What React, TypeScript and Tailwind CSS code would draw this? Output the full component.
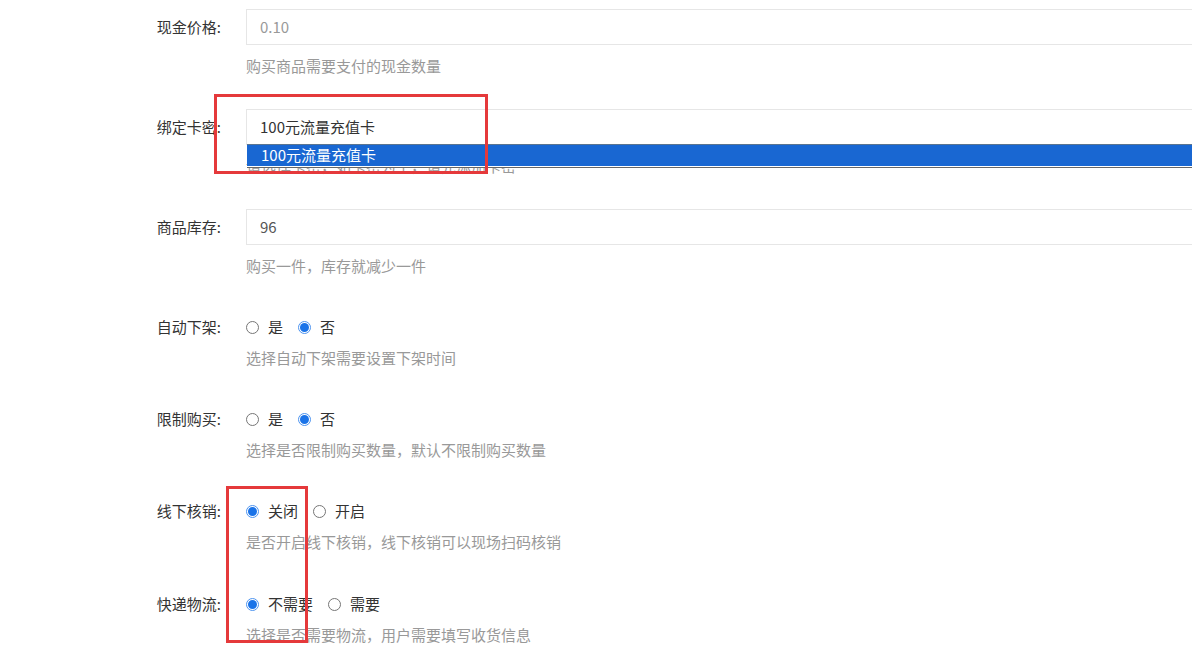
import React from "react";

const FONT = { fontFamily: '"Noto Sans CJK SC", "Noto Sans", sans-serif' };

function Label({ text }: { text: string }) {
  return (
    <div className="w-[246px] shrink-0 pr-[25px] text-right text-[15px] text-[#333]">{text}</div>
  );
}

function Help({ text }: { text: string }) {
  return <div className="mt-[11px] pl-[246px] text-[15px] leading-[20px] text-[#999]">{text}</div>;
}

function InputRow({
  label,
  value,
  help,
  valueClass,
}: {
  label: string;
  value: string;
  help: string;
  valueClass: string;
}) {
  return (
    <div className="relative mb-[33px]">
      <div className="flex items-center">
        <Label text={label} />
        <div className="flex h-[36px] flex-1 items-center border border-r-0 border-[#e6e6e6] bg-white pl-[13px]">
          <span className={`text-[15px] ${valueClass}`}>{value}</span>
        </div>
      </div>
      <Help text={help} />
    </div>
  );
}

function Radio({ checked, text }: { checked: boolean; text: string }) {
  return (
    <div className="mr-[15px] flex items-center">
      {checked ? (
        <span className="flex h-[13px] w-[13px] items-center justify-center rounded-full border border-[#4d94f0] bg-white">
          <span className="h-[9px] w-[9px] rounded-full bg-[#1a73e8]" />
        </span>
      ) : (
        <span className="h-[13px] w-[13px] rounded-full border border-[#767676] bg-white" />
      )}
      <span className="ml-[9px] text-[15px] text-[#333]">{text}</span>
    </div>
  );
}

function RadioRow({
  label,
  options,
  help,
  last,
}: {
  label: string;
  options: { text: string; checked: boolean }[];
  help: string;
  last?: boolean;
}) {
  return (
    <div className={last ? "mt-[42px]" : "mt-[41px]"}>
      <div className="flex h-[20px] items-center">
        <Label text={label} />
        {options.map((o) => (
          <Radio key={o.text} checked={o.checked} text={o.text} />
        ))}
      </div>
      <Help text={help} />
    </div>
  );
}

export default function App() {
  return (
    <div className="relative h-[667px] w-[1192px] overflow-hidden bg-white pt-[9px]" style={FONT}>
      <InputRow label="现金价格:" value="0.10" valueClass="text-[#999]" help="购买商品需要支付的现金数量" />

      <div className="relative mb-[33px]">
        <div className="flex items-center">
          <Label text="绑定卡密:" />
          <div className="flex h-[36px] flex-1 items-center border border-r-0 border-[#e6e6e6] bg-white pl-[13px]">
            <span className="text-[15px] text-[#333]">100元流量充值卡</span>
          </div>
        </div>
        <Help text="请选择卡密，如卡密为空，请先添加卡密" />
        {/* open select list */}
        <div className="absolute left-[247px] right-0 top-[35px] border-t border-[#5b7590] bg-white">
          <div className="flex h-[21px] items-center bg-[#1967d2] pl-[14px] text-[15px] text-white">
            100元流量充值卡
          </div>
          <div className="h-[1px] bg-white" />
          <div className="h-[1px] bg-[#666]" />
        </div>
      </div>

      <InputRow label="商品库存:" value="96" valueClass="text-[#555]" help="购买一件，库存就减少一件" />

      <RadioRow
        label="自动下架:"
        options={[
          { text: "是", checked: false },
          { text: "否", checked: true },
        ]}
        help="选择自动下架需要设置下架时间"
      />
      <RadioRow
        label="限制购买:"
        options={[
          { text: "是", checked: false },
          { text: "否", checked: true },
        ]}
        help="选择是否限制购买数量，默认不限制购买数量"
      />
      <RadioRow
        label="线下核销:"
        options={[
          { text: "关闭", checked: true },
          { text: "开启", checked: false },
        ]}
        help="是否开启线下核销，线下核销可以现场扫码核销"
      />
      <RadioRow
        label="快递物流:"
        options={[
          { text: "不需要", checked: true },
          { text: "需要", checked: false },
        ]}
        help="选择是否需要物流，用户需要填写收货信息"
        last
      />

      {/* red annotation boxes */}
      <div className="pointer-events-none absolute left-[214px] top-[94px] h-[80px] w-[274px] border-[3px] border-[#e5393b]" />
      <div className="pointer-events-none absolute left-[226px] top-[486px] h-[157px] w-[82px] border-[3px] border-[#e5393b]" />
    </div>
  );
}
